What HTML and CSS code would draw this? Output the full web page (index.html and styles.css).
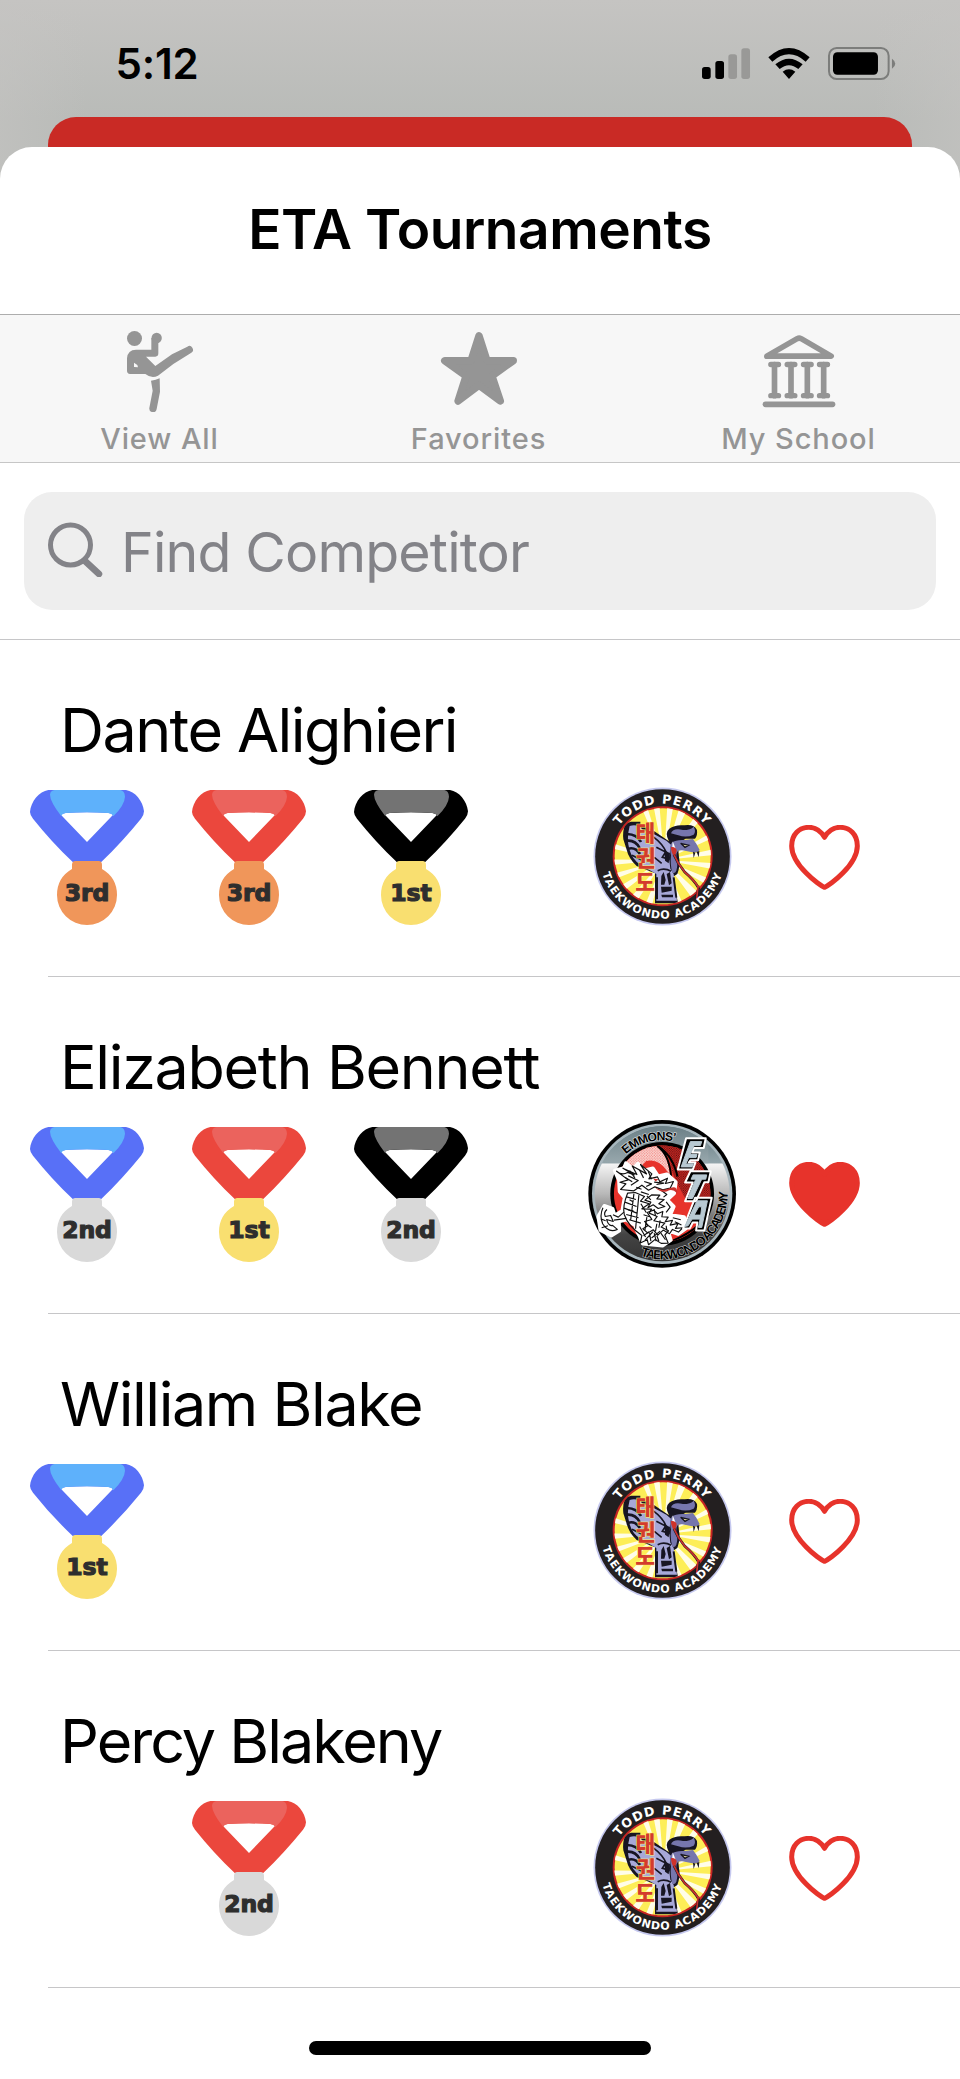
FILE: index.html
```html
<!DOCTYPE html>
<html lang="en">
<head>
<meta charset="utf-8">
<title>ETA Tournaments</title>
<link rel="stylesheet" href="styles.css">
</head>
<body>
<svg class="defs" aria-hidden="true">
  <defs>
    <linearGradient id="steel" x1="0" y1="0" x2="0" y2="1">
      <stop offset="0" stop-color="#5f757c"/><stop offset=".27" stop-color="#93a5ab"/><stop offset=".28" stop-color="#f4f4f4"/><stop offset=".5" stop-color="#b8b8b8"/><stop offset=".8" stop-color="#444"/><stop offset="1" stop-color="#333"/>
    </linearGradient>
    <linearGradient id="band" x1="0" y1="0" x2="0" y2="1">
      <stop offset="0" stop-color="#6c8087"/><stop offset="1" stop-color="#98a8ad"/>
    </linearGradient>
    <pattern id="dots" width="7" height="7" patternUnits="userSpaceOnUse">
      <rect width="7" height="7" fill="#d92a24"/><circle cx="2" cy="2" r="1.8" fill="#4c0f10"/><circle cx="5.5" cy="5.5" r="1.8" fill="#4c0f10"/>
    </pattern>
    <pattern id="pinkdots" width="8" height="8" patternUnits="userSpaceOnUse">
      <rect width="8" height="8" fill="#fbe3e0"/><circle cx="2" cy="2" r="1.9" fill="#ef6a62"/><circle cx="6" cy="6" r="1.9" fill="#ef6a62"/>
    </pattern>
    <clipPath id="tpInner"><circle cx="281" cy="259" r="145"/></clipPath>
    <clipPath id="etaInner"><circle cx="278" cy="282" r="145"/></clipPath>
    <path id="tpTop" d="M122 259A158 158 0 0 1 438 259"/>
    <path id="tpBottom" d="M93 259A187 187 0 0 0 467 259"/>
    <path id="etaTop" d="M117 282A161 161 0 0 1 439 282"/>
    <path id="etaBottom" d="M81 282A197 197 0 0 0 475 282"/>
  </defs>

  <symbol id="ribbon" viewBox="90 60 342 405">
    <path class="ribbon-main" d="M145 60H378C405 64 429 93 432 124Q432 135 423 146Q368 214 303 277H219Q153 214 99 146Q90 135 90 126C92 95 118 64 145 60ZM184 136L261 216L338 136Q338 131 325 129Q261 125 197 129Q184 131 184 136Z"/>
    <path class="ribbon-fold" d="M164 60H361Q374 62 375 80Q374 105 340 139Q338 131 325 129Q261 125 197 129Q185 131 184 139Q150 94 150 74Q151 62 164 60Z"/>
    <path class="medal-disc" d="M226 273H296Q306 274 306 284V297Q351 323 351 375A90 90 0 0 1 171 375Q171 323 216 297V284Q216 274 226 273Z"/>
  </symbol>

  <symbol id="todd-perry" viewBox="72 51 417 417">
    <circle cx="280.500" cy="259.500" r="207" fill="#c5c8ee"/>
    <circle cx="280.500" cy="259.500" r="202" fill="#231f20"/>
    <circle cx="281" cy="259" r="150" fill="#c62423"/>
    <circle cx="281" cy="259" r="144" fill="#fdee57"/>
    <g clip-path="url(#tpInner)">
      <path fill="#fffde8" d="M285 270L212 100L231 100ZM285 270L250 90L270 90ZM285 270L296 90L316 90ZM285 270L338 90L362 100ZM285 270L385 130L398 146ZM285 270L430 186L436 202ZM285 270L440 236V254ZM285 270L440 280V299ZM285 270L430 330L420 348ZM285 270L395 375L375 392ZM285 270L345 410H323ZM285 270L245 420H222ZM285 270L198 402L180 388ZM285 270L162 365L150 350ZM285 270L130 330V312ZM285 270L125 285V268ZM285 270L130 236V220Z"/>
      <path fill="#171522" d="M163 208Q158 160 186 155H214V168Q240 170 256 184L290 207L300 214Q286 188 301 176Q318 163 347 166Q375 162 384 180Q386 198 378 206H350L326 220L330 262Q335 285 325 312L312 320L327 400H258V310L203 288Q179 266 172 236Z"/>
      <path fill="#a7a8d8" d="M182 168Q206 160 222 180Q258 192 292 212L306 224L300 262L304 296L314 312L324 392H262V312L214 284Q190 270 181 238Q172 205 182 168Z"/>
      <path fill="#7676ad" d="M306 190Q312 173 342 180Q366 180 374 170Q382 184 374 194Q352 204 328 196Q316 193 306 190ZM308 218Q322 208 347 210L372 207Q384 222 392 240Q386 250 370 247L340 241Q321 238 322 258Q328 282 322 302Q318 312 310 308Q303 285 306 256Q300 235 308 218Z"/>
      <path fill="#171522" d="M372 245L374 264L379 248ZM383 246L389 262L391 243Z"/>
      <path fill="none" stroke="#171522" stroke-width="8" d="M174 192Q204 193 216 216M173 212Q199 209 212 234M178 236Q199 230 213 252"/>
      <path fill="none" stroke="#171522" stroke-width="5" d="M189 256L218 270M252 200Q282 222 292 248M262 232L290 246L280 262L302 268M256 262L278 280M266 302Q286 292 306 304"/>
      <path fill="#171522" d="M286 240L303 250L299 280L288 272ZM277 318L284 306L290 330L286 344H276ZM293 312L303 306L308 340L300 346ZM276 350H308V362L278 368ZM277 374H312V382H279Z"/>
      <path fill="none" stroke="#171522" stroke-width="6" d="M264 322V388M314 322L322 383"/>
      <path fill="#fdf5ae" stroke="#171522" stroke-width="4" d="M335 220L359 226L348 232Z"/>
      <path fill="#fff" d="M311 214L320 236L310 231Z"/>
      <path fill="#cf332b" d="M306 231Q322 230 323 242L318 262Q306 250 306 231Z"/>
    </g>
    <path fill="none" stroke="#171522" stroke-width="8" d="M315 254Q326 281 347 306Q375 330 389 354L381 388"/>
    <path fill="none" stroke="#c9312d" stroke-width="5" d="M315 254Q326 281 347 306Q375 330 387 350L383 388M386 350L397 350"/>
    <g class="hangul"><text x="229" y="214">태</text><text x="230" y="287">권</text><text x="228" y="360">도</text></g>
    <text class="tp-ring"><textPath href="#tpTop" startOffset="50%">TODD PERRY</textPath></text>
    <text class="tp-ring tp-ring-small"><textPath href="#tpBottom" startOffset="50%">TAEKWONDO ACADEMY</textPath></text>
  </symbol>

  <symbol id="emmons" viewBox="55 60 445 445">
    <circle cx="278" cy="282" r="222" fill="#000"/>
    <circle cx="278" cy="282" r="211" fill="#a7b6bd"/>
    <circle cx="278" cy="282" r="203" fill="url(#steel)"/>
    <path fill="url(#band)" d="M100 185A203 203 0 0 1 417 134V190H155Z"/>
    <circle cx="278" cy="282" r="156" fill="#000"/>
    <g clip-path="url(#etaInner)">
      <rect x="130" y="130" width="300" height="300" fill="#e7332b"/>
      <path fill="url(#dots)" d="M264 130H440V320L350 300Q310 230 306 205Q297 153 264 140Z"/>
      <path fill="url(#pinkdots)" d="M135 210Q170 133 264 139Q294 158 302 230Q275 175 230 183L192 224Z"/>
      <path fill="none" stroke="#000" stroke-width="6" d="M263 138Q300 165 305 230M264 138Q311 168 324 230M424 315Q410 381 310 423"/>
    </g>
    <path fill="#fff" stroke="#fff" stroke-width="11" stroke-linejoin="round" d="M135 212L164 204L169 190L190 207L205 191L226 211L250 205L266 229L292 223L319 247L314 281L293 300L313 320L302 346L344 352L349 386L326 403L295 392L304 421L279 438L219 432L211 411L203 396L196 376L169 360L148 365L149 393L125 408L92 391L86 350L104 318L129 327L135 347L158 333L165 293L150 275L148 241Z"/>
    <g fill="none" stroke="#111" stroke-width="3.500" stroke-linejoin="round">
      <path d="M141 214Q157 228 174 218L194 225L160 205L202 224L188 198L231 222L213 194L247 222L238 237L264 231L271 246L294 235L288 251L312 245L302 265L280 270L256 261L237 271L217 256L193 273L153 269L169 252L151 247L176 240Z"/>
      <path d="M174 280Q158 320 164 344Q176 380 217 407L212 430L233 420L237 435L257 419L275 431L296 430L286 406L297 393L275 382L286 370L253 363L263 350L239 340L246 328L217 327L239 312L213 304L225 290L197 278ZM171 291L199 299M166 307L201 320M164 325L202 340M170 344L207 354M179 360L214 370M193 282L183 363M208 286L198 387"/>
      <path d="M100 324Q89 347 99 372Q117 401 143 389L129 377Q116 380 111 359L131 365L123 347L107 350Q101 338 112 329M130 345L146 352L163 337M133 361L155 358L170 356M96 384L115 378M93 357L108 363"/>
      <path d="M233 338L252 331L264 342L280 335L277 351L296 352L287 366L309 362L302 376L326 371L318 386L340 384L327 397L309 389L300 402L281 391L265 406L251 390L235 400L220 387L236 377L225 365L247 359ZM247 285L271 286L262 297L284 299L268 312L286 320L266 326L251 315L235 324L244 307L226 301ZM224 245L246 252L230 260M254 247L283 250L261 254M246 415L272 394M226 422L250 396M222 345L240 351M228 372L246 384M262 372L258 394M272 362L268 384M290 378L292 392M214 312L230 338M176 228L206 242L184 256M200 262L216 268M240 400L244 424M262 408L268 424"/>
      <path d="M180 212L196 234M210 210L222 234M236 214L246 238M166 232L188 246M214 276L238 284M232 288L244 300M276 272L292 284L282 292M254 328L258 348M290 306L302 322L290 338M310 354L334 360M316 366L336 376M232 352L226 392M210 380L228 412M222 408L238 396M254 400L260 424M274 400L288 420M180 300L190 306M176 330L192 334"/>
    </g>
    <path fill="#c9312d" d="M251 236L267 238L258 245ZM256 262Q274 275 295 267Q325 253 323 280Q308 264 293 274Q273 280 256 262Z"/>
    <text class="eta-ring"><textPath href="#etaTop" startOffset="133">EMMONS’</textPath></text>
    <text class="eta-ring eta-ring-bottom"><textPath href="#etaBottom" startOffset="242">TAEKWONDO ACADEMY</textPath></text>
    <g stroke-linejoin="round">
      <path fill="#000" stroke="#fff" stroke-width="6" d="M350 115H409L403 144H374L368 158H391L386 181H363L358 188H378L370 209H325ZM363 214H424L417 247H405L380 304H347L370 248H347ZM377 294H427L405 392H380L384 368H370L361 386H341Z"/>
      <path fill="#b8c9d2" stroke="#b8c9d2" stroke-width="3" d="M363 125H397L393 137H374L362 164H383L380 173H358L349 192H372L368 201H335ZM371 225H412L409 238H397L369 296H355L379 238H365ZM383 303H414L397 383H387L392 358H368L356 378L346 380ZM388 321L374 346H394L397 321Z"/>
    </g>
  </symbol>

  <symbol id="heart" viewBox="657 165 212 196">
    <path d="M763 353C748 348 664 285 664 228C664 193 687 172 716 172C738 172 753 185 763 202C773 185 788 172 810 172C839 172 862 193 862 228C862 285 778 348 763 353Z"/>
  </symbol>
</svg>

<div class="screen">
  <header class="status">
    <span class="clock">5:12</span>
    <svg class="status-icons" viewBox="660 135 590 110">
      <rect x="666" y="201" width="26" height="36" rx="8"/><rect x="706" y="183" width="26" height="54" rx="8"/>
      <rect class="dim" x="745" y="163" width="26" height="74" rx="8"/><rect class="dim" x="784" y="145" width="26" height="92" rx="8"/>
      <path d="M865 172Q927 116 989 172L977 185Q927 141 877 185ZM886 193Q927 159 968 193L955 207Q927 184 899 207ZM908 215Q927 201 946 215L927 237Z"/>
      <rect class="cell" x="1047" y="144" width="179" height="93" rx="23"/><rect x="1059" y="157" width="135" height="67" rx="13"/>
      <path class="nub" d="M1236 176Q1246 183 1246 191T1236 206Z"/>
    </svg>
  </header>
  <div class="card-behind"></div>
  <main class="sheet">
    <h1 class="title">ETA Tournaments</h1>
    <nav class="tabs">
      <a class="tab"><svg viewBox="120 54 240 252"><circle cx="163.500" cy="85.500" r="22.500"/><circle cx="230" cy="84" r="15.500"/><path fill-rule="evenodd" d="M141 145Q143 119 168 119H214V84H235V130Q235 140 226 140H198L226 168L276 133L322 110A10 10 0 0 1 334 128L280 162L234 197Q215 207 196 192H150Q141 191 141 182ZM162 158V171L174 172L172 165Z"/><path d="M213 212Q228 211 239 205L240 245L230 297A11 11 0 0 1 208 294L218 242Z"/></svg><span>View All</span></a>
      <a class="tab"><svg viewBox="1074 54 240 252"><path class="star" d="M1194 77L1218 152H1297L1233 198L1258 273L1194 226L1131 273L1155 198L1091 152H1170Z"/></svg><span>Favorites</span></a>
      <a class="tab"><svg viewBox="775.5 54 240 252"><path class="roof" d="M799 138.500L890 86Q896 83 902 86L992 138.500Z"/><path class="columns" d="M811 163.500H834M860 163.500H883M909 163.500H932M957 163.500H981M811 257H834M860 257H883M909 257H932M957 257H981"/><path class="stems" d="M822 164V257M871.500 164V257M920.500 164V257M969.500 164V257"/><path class="step" d="M795 283H996"/></svg><span>My School</span></a>
    </nav>
    <div class="search-wrap">
      <div class="search">
        <svg viewBox="0 0 56 56"><circle cx="22.500" cy="24" r="20"/><path d="M37 40L51 53"/></svg>
        <span>Find Competitor</span>
      </div>
    </div>
    <ul class="list">
      <li class="row">
        <h2 class="name n1">Dante Alighieri</h2>
        <div class="details">
          <div class="medals">
            <div class="medal blue bronze"><svg><use href="#ribbon"/></svg><b>3rd</b></div>
            <div class="medal red bronze"><svg><use href="#ribbon"/></svg><b>3rd</b></div>
            <div class="medal black gold"><svg><use href="#ribbon"/></svg><b>1st</b></div>
          </div>
          <svg class="school todd"><use href="#todd-perry"/></svg>
          <svg class="heart"><use href="#heart"/></svg>
        </div>
      </li>
      <li class="row">
        <h2 class="name n2">Elizabeth Bennett</h2>
        <div class="details">
          <div class="medals">
            <div class="medal blue silver"><svg><use href="#ribbon"/></svg><b>2nd</b></div>
            <div class="medal red gold"><svg><use href="#ribbon"/></svg><b>1st</b></div>
            <div class="medal black silver"><svg><use href="#ribbon"/></svg><b>2nd</b></div>
          </div>
          <svg class="school eta"><use href="#emmons"/></svg>
          <svg class="heart on"><use href="#heart"/></svg>
        </div>
      </li>
      <li class="row">
        <h2 class="name n3">William Blake</h2>
        <div class="details">
          <div class="medals">
            <div class="medal blue gold"><svg><use href="#ribbon"/></svg><b>1st</b></div>
          </div>
          <svg class="school todd"><use href="#todd-perry"/></svg>
          <svg class="heart"><use href="#heart"/></svg>
        </div>
      </li>
      <li class="row">
        <h2 class="name n4">Percy Blakeny</h2>
        <div class="details">
          <div class="medals">
            <div class="medal second red silver"><svg><use href="#ribbon"/></svg><b>2nd</b></div>
          </div>
          <svg class="school todd"><use href="#todd-perry"/></svg>
          <svg class="heart"><use href="#heart"/></svg>
        </div>
      </li>
    </ul>
    <div class="home-indicator"></div>
  </main>
</div>
</body>
</html>
```
FILE: styles.css
```css
* { box-sizing: border-box; }
body { margin: 0; font-family: Inter, "Liberation Sans", sans-serif; color: #000; background: #bfc0bd; }
.defs { position: absolute; width: 0; height: 0; }
svg { display: block; flex: none; }

.screen {
  height: 2079px;
  display: flex;
  flex-direction: column;
  overflow: hidden;
  background: linear-gradient(90deg, rgba(197,196,194,.55), transparent 9%, transparent 91%, rgba(197,196,194,.55)), linear-gradient(#c5c4c2, #b9bbb8 117px);
}
.status { height: 117px; flex: none; display: flex; justify-content: space-between; padding: 45px 63px 0 115.500px; }
.clock { font-size: 42px; font-weight: 600; line-height: 38px; letter-spacing: -.2px; }
.status-icons { width: 196.670px; height: 36.670px; }
.dim { fill: #999997; }
.cell { fill: none; stroke: #7c7d7b; stroke-width: 6; }
.nub { fill: #7c7d7b; }
.card-behind { flex: none; height: 30px; margin: 0 48px; background: #c92a25; border-radius: 28px 28px 0 0; }
.sheet { flex: 1; background: #fff; border-radius: 32px 32px 0 0; display: flex; flex-direction: column; }
.title { margin: 0; height: 167px; line-height: 164px; text-align: center; font-size: 55px; font-weight: 600; letter-spacing: -.45px; flex: none; }

.tabs { flex: none; height: 149px; display: grid; grid-template-columns: repeat(3, 1fr); background: #f7f7f7; border-top: 1px solid #adadad; border-bottom: 1px solid #c6c6c6; }
.tab { display: flex; flex-direction: column; align-items: center; padding: 13px 1px 0 0; color: #959595; }
.tab svg { width: 80px; height: 84px; fill: #959595; }
.tab:nth-child(n+2) { padding-right: 3px; }
.tab span { font-size: 29px; line-height: 36px; margin-top: 9px; font-weight: 450; letter-spacing: .9px; }
.star { stroke: #959595; stroke-width: 22; stroke-linejoin: round; }
.roof, .columns, .stems, .step { fill: none; stroke: #959595; stroke-width: 17; stroke-linecap: round; stroke-linejoin: round; }
.columns { stroke-width: 16; }

.search-wrap { flex: none; height: 177px; padding: 29px 24px; border-bottom: 1px solid #c6c6c8; }
.search { height: 118px; border-radius: 28px; background: #eee; display: flex; align-items: center; padding: 0 24px; color: #838388; }
.search svg { width: 56px; height: 56px; margin-top: -4px; fill: none; stroke: #838388; stroke-width: 5; stroke-linecap: round; }
.search path { stroke-width: 6.5; }
.search span { margin-left: 17px; font-size: 55.500px; letter-spacing: -.85px; line-height: 66px; padding-top: 1px; }

.list { list-style: none; margin: 0; padding: 0; }
.row { height: 337px; padding: 53px 100px 0 30px; background: linear-gradient(#c6c6c8, #c6c6c8) 48px 336px / 912px 1px no-repeat; }
.name { margin: 0 0 0 30px; height: 77px; line-height: 74px; font-size: 61px; font-weight: 400; white-space: nowrap; }
.n1 { letter-spacing: -1.57px; }
.n2 { letter-spacing: -1.33px; }
.n3 { letter-spacing: -1.43px; }
.n4 { letter-spacing: -2px; }
.details { display: flex; height: 175px; align-items: flex-start; }
.medals { width: 563px; flex: none; display: flex; gap: 48px; padding-top: 20px; }
.medal { display: grid; width: 114px; height: 135px; flex: none; }
.medal > * { grid-area: 1 / 1; }
.medal svg { width: 114px; height: 135px; }
.medal b { margin-top: 90px; text-align: center; font: bold 23.500px/26px "DejaVu Sans", sans-serif; letter-spacing: -.1px; color: #2e2e2e; -webkit-text-stroke: 1.200px #2e2e2e; }
.second { margin-left: 162px; }
.blue { --main: #5870f7; --fold: #5eb1fb; }
.red { --main: #eb473d; --fold: #eb635d; }
.black { --main: #000; --fold: #737373; }
.gold { --disc: #f9df70; }
.silver { --disc: #d9d9d9; }
.bronze { --disc: #f0965a; }
.ribbon-main { fill: var(--main); fill-rule: evenodd; }
.ribbon-fold { fill: var(--fold); }
.medal-disc { fill: var(--disc); }
.todd { width: 139px; height: 139px; margin: 17px 0 0; }
.eta { width: 148px; height: 148px; margin: 13px -4px 0 -5px; }
.heart { width: 71px; height: 65px; margin: 55px 0 0 56.500px; fill: none; stroke: #e7332b; stroke-width: 15; stroke-linejoin: round; }
.heart.on { fill: #e7332b; }
.tp-ring { font: bold 38px "DejaVu Sans", sans-serif; letter-spacing: 3px; fill: #fff; text-anchor: middle; }
.tp-ring-small { font-size: 33px; letter-spacing: 2.800px; }
.hangul { font: 900 64px "Noto Sans CJK KR", sans-serif; fill: #d33b2d; stroke: #fff36b; stroke-width: 3; paint-order: stroke; text-anchor: middle; }
.eta-ring { font: bold 37px "Liberation Sans", sans-serif; letter-spacing: -3px; fill: #000; stroke: #e8eced; stroke-width: 3; paint-order: stroke; }
.eta-ring-bottom { font-size: 39px; letter-spacing: -5px; stroke: #ccc; }
.home-indicator { flex: none; width: 342px; height: 14px; border-radius: 7px; background: #000; margin: 53px auto 0; }
```
